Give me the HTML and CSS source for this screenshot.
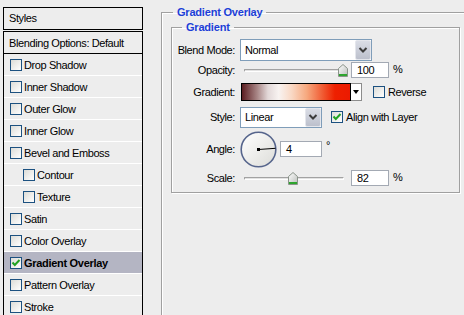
FILE: index.html
```html
<!DOCTYPE html>
<html lang="en">
<head>
    <meta charset="UTF-8">
    <meta name="viewport" content="width=device-width, initial-scale=1.0">
    <title>Layer Style - Gradient Overlay</title>
    <link rel="stylesheet" href="styles.css">
</head>
<body>
    <div class="dialog">
        <div class="styles-panel">
            <div class="panel-head">Styles</div>
            <ul class="style-list">
                <li class="blending">Blending Options: Default</li>
                <li><span class="check"></span>Drop Shadow</li>
                <li><span class="check"></span>Inner Shadow</li>
                <li><span class="check"></span>Outer Glow</li>
                <li><span class="check"></span>Inner Glow</li>
                <li><span class="check"></span>Bevel and Emboss</li>
                <li class="sub"><span class="check"></span>Contour</li>
                <li class="sub"><span class="check"></span>Texture</li>
                <li><span class="check"></span>Satin</li>
                <li><span class="check"></span>Color Overlay</li>
                <li class="selected">
                    <span class="check">
                        <svg width="10" height="10" viewBox="0 0 10 10"><path d="M1.5 4.5 L3.8 7 L8.5 2" fill="none" stroke="#22a322" stroke-width="2"/></svg>
                    </span>Gradient Overlay
                </li>
                <li><span class="check"></span>Pattern Overlay</li>
                <li><span class="check"></span>Stroke</li>
            </ul>
        </div>

        <div class="options">
            <fieldset class="group outer">
                <legend>Gradient Overlay</legend>
                <fieldset class="group inner">
                    <legend>Gradient</legend>

                    <div class="row r-blend">
                        <span class="lbl">Blend Mode:</span>
                        <div class="combo blend-combo">
                            <span class="combo-text">Normal</span>
                            <span class="combo-btn">
                                <svg width="10" height="8" viewBox="0 0 10 8"><path d="M1.5 2 L5 5.5 L8.5 2" fill="none" stroke="#3c3c3c" stroke-width="2"/></svg>
                            </span>
                        </div>
                    </div>

                    <div class="row r-opacity">
                        <span class="lbl">Opacity:</span>
                        <div class="slider">
                            <div class="track"></div>
                            <svg class="thumb" style="left:94px" width="10" height="13" viewBox="0 0 10 13">
                                <defs>
                                    <linearGradient id="tg1" x1="0" y1="0" x2="1" y2="1">
                                        <stop offset="0" stop-color="#ffffff"/>
                                        <stop offset="1" stop-color="#b8bcb8"/>
                                    </linearGradient>
                                </defs>
                                <path d="M0.5 4.5 L5 0.5 L9.5 4.5 V12.5 H0.5 Z" fill="url(#tg1)" stroke="#8a948a"/>
                                <rect x="1" y="10" width="8" height="2" fill="#2ea52e"/>
                            </svg>
                        </div>
                        <span class="num">100</span>
                        <span class="unit">%</span>
                    </div>

                    <div class="row r-grad">
                        <span class="lbl">Gradient:</span>
                        <div class="grad-pick">
                            <span class="grad-swatch"></span>
                            <span class="grad-arrow"><span class="tri"></span></span>
                        </div>
                        <span class="check box-reverse"></span>
                        <span class="opt-text">Reverse</span>
                    </div>

                    <div class="row r-style">
                        <span class="lbl">Style:</span>
                        <div class="combo style-combo">
                            <span class="combo-text">Linear</span>
                            <span class="combo-btn">
                                <svg width="10" height="8" viewBox="0 0 10 8"><path d="M1.5 2 L5 5.5 L8.5 2" fill="none" stroke="#3c3c3c" stroke-width="2"/></svg>
                            </span>
                        </div>
                        <span class="check box-align">
                            <svg width="10" height="10" viewBox="0 0 10 10"><path d="M1.5 4.5 L3.8 7 L8.5 2" fill="none" stroke="#22a322" stroke-width="2"/></svg>
                        </span>
                        <span class="opt-text">Align with Layer</span>
                    </div>

                    <div class="row r-angle">
                        <span class="lbl">Angle:</span>
                        <svg class="dial" width="37" height="37" viewBox="0 0 37 37">
                            <defs>
                                <linearGradient id="dg" x1="0" y1="0" x2="1" y2="1">
                                    <stop offset="0" stop-color="#ffffff"/>
                                    <stop offset="1" stop-color="#dcdcd8"/>
                                </linearGradient>
                            </defs>
                            <circle cx="18.5" cy="18.5" r="17.3" fill="url(#dg)" stroke="#56658c" stroke-width="1.6"/>
                            <line x1="18.5" y1="18.5" x2="35.5" y2="17.3" stroke="#000" stroke-width="1"/>
                            <rect x="17" y="17" width="3" height="3" fill="#000"/>
                        </svg>
                        <span class="num angle-num">4</span>
                        <span class="deg">°</span>
                    </div>

                    <div class="row r-scale">
                        <span class="lbl">Scale:</span>
                        <div class="slider">
                            <div class="track"></div>
                            <svg class="thumb" style="left:44px" width="10" height="13" viewBox="0 0 10 13">
                                <defs>
                                    <linearGradient id="tg2" x1="0" y1="0" x2="1" y2="1">
                                        <stop offset="0" stop-color="#ffffff"/>
                                        <stop offset="1" stop-color="#b8bcb8"/>
                                    </linearGradient>
                                </defs>
                                <path d="M0.5 4.5 L5 0.5 L9.5 4.5 V12.5 H0.5 Z" fill="url(#tg2)" stroke="#8a948a"/>
                                <rect x="1" y="10" width="8" height="2" fill="#2ea52e"/>
                            </svg>
                        </div>
                        <span class="num">82</span>
                        <span class="unit">%</span>
                    </div>
                </fieldset>
            </fieldset>
        </div>
    </div>
</body>
</html>
```

FILE: styles.css
```css
body {
    margin: 0;
    background-color: #ededed;
    font-family: "Liberation Sans", Arial, sans-serif;
    font-size: 11px;
    letter-spacing: -0.4px;
    color: #000;
    overflow: hidden;
}

.dialog {
    display: flex;
    height: 315px;
}

/* left list of styles */
.styles-panel {
    flex-shrink: 0;
    width: 140px;
    margin: 7px 0 0 3px;
}

.panel-head {
    height: 21px;
    line-height: 21px;
    padding-left: 5px;
    border: 1px solid #000;
    margin-bottom: 1px;
}

.style-list {
    list-style: none;
    margin: 0;
    padding: 0;
    border: 1px solid #000;
    border-bottom: none;
}

.style-list li {
    display: flex;
    align-items: center;
    height: 21px;
    padding-left: 6px;
    border-bottom: 1px solid #fff;
}

.style-list .blending {
    height: 21px;
    padding-left: 5px;
    border-bottom-color: #000;
}

.style-list .sub {
    padding-left: 19px;
}

.style-list .selected {
    background-color: #b4b5c3;
    font-weight: bold;
    letter-spacing: -0.3px;
}

.check {
    display: inline-flex;
    align-items: center;
    justify-content: center;
    flex-shrink: 0;
    width: 12px;
    height: 12px;
    box-sizing: border-box;
    margin-right: 2px;
    border: 1px solid #1c5180;
    background: linear-gradient(135deg, #dcdcd7, #ffffff);
}

/* right side options */
.options {
    flex: 1;
    min-width: 0;
}

.group {
    margin: 0;
    padding: 0;
    min-width: 0;
    box-sizing: border-box;
    border: 1px solid #a0a0a0;
    box-shadow: 1px 1px 0 #fff, inset 1px 1px 0 #fff;
}

.group legend {
    padding: 0 4px;
    line-height: 14px;
    font-weight: bold;
    letter-spacing: -0.2px;
    color: #1c3fd8;
}

.outer {
    margin: 5px 0 0 18px;
    padding-top: 1px;
    width: 312px;
    height: 400px;
}

.outer > legend {
    margin-left: 11px;
}

.inner {
    margin-left: 9px;
    padding: 5px 0;
    width: 289px;
}

.inner > legend {
    margin-left: 10px;
}

.row {
    display: flex;
    align-items: center;
}

.r-blend { height: 22px; }
.r-opacity { height: 18px; }
.r-grad { height: 26px; }
.r-style { height: 24px; }
.r-angle { height: 40px; }
.r-scale { height: 18px; }

.lbl {
    flex-shrink: 0;
    width: 63px;
    margin-right: 5px;
    text-align: right;
}

.combo {
    display: flex;
    box-sizing: border-box;
    border: 1px solid #7f9db9;
    background-color: #fff;
}

.blend-combo {
    width: 132px;
    height: 22px;
}

.style-combo {
    width: 82px;
    height: 21px;
}

.combo-text {
    flex: 1;
    padding-left: 4px;
    align-self: center;
}

.combo-btn {
    display: flex;
    align-items: center;
    justify-content: center;
    width: 16px;
    box-sizing: border-box;
    border: 1px solid #e4e6ec;
    border-radius: 2px;
    background: linear-gradient(#dadde6, #bcc0cc);
}

.slider {
    position: relative;
    width: 100px;
    height: 16px;
    margin-left: 4px;
    display: flex;
    align-items: center;
}

.track {
    width: 100%;
    height: 3px;
    box-sizing: border-box;
    border-top: 1px solid #a2a2a2;
    border-left: 1px solid #a2a2a2;
    border-bottom: 1px solid #fff;
    border-right: 1px solid #fff;
    background-color: #e2e2e2;
    border-radius: 1px;
}

.thumb {
    position: absolute;
    top: 2px;
}

.num {
    width: 38px;
    height: 16px;
    line-height: 14px;
    box-sizing: border-box;
    margin-left: 7px;
    padding-left: 5px;
    border: 1px solid #a3a9b3;
    background-color: #fff;
}

.unit {
    margin-left: 4px;
    margin-bottom: 3px;
}

.grad-pick {
    display: flex;
    height: 18px;
    margin-left: 1px;
}

.grad-swatch {
    width: 110px;
    box-sizing: border-box;
    border: 1px solid #000;
    background: linear-gradient(to right, #5b1d21 0%, #a88686 14%, #e2d8d8 24%, #f8f3f1 34%, #f9d8c4 46%, #f6a87e 60%, #f0542c 76%, #ee2000 86%, #ec1a00 100%);
}

.grad-arrow {
    display: flex;
    align-items: center;
    justify-content: center;
    width: 11px;
    box-sizing: border-box;
    border: 1px solid #8c8c8c;
    border-left: none;
    background-color: #fff;
}

.tri {
    width: 0;
    height: 0;
    border-left: 3px solid transparent;
    border-right: 3px solid transparent;
    border-top: 4px solid #000;
}

.box-reverse {
    margin-left: 11px;
    margin-right: 3px;
}

.box-align {
    margin-left: 9px;
    margin-right: 3px;
}

.dial {
    flex-shrink: 0;
}

.angle-num {
    width: 42px;
    margin-left: 3px;
}

.deg {
    margin-left: 4px;
    margin-bottom: 8px;
}
```
